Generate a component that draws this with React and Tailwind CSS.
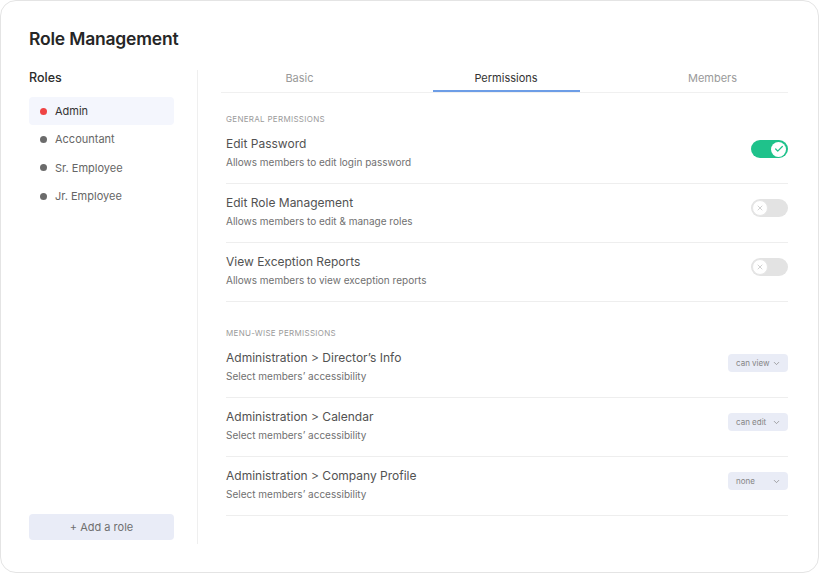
import { Check, X, ChevronDown } from "lucide-react";

const roles = [
    { name: "Admin", active: true },
    { name: "Accountant" },
    { name: "Sr. Employee" },
    { name: "Jr. Employee" },
];

const general = [
    { title: "Edit Password", desc: "Allows members to edit login password", on: true },
    { title: "Edit Role Management", desc: "Allows members to edit & manage roles" },
    { title: "View Exception Reports", desc: "Allows members to view exception reports" },
];

const menuWise = [
    { title: "Administration > Director’s Info", value: "can view" },
    { title: "Administration > Calendar", value: "can edit" },
    { title: "Administration > Company Profile", value: "none" },
];

// Small on/off switch used in general permissions
const Toggle = ({ on }) =>
    on ? (
        <div className="mt-1 w-[37px] h-[18px] rounded-full bg-[#1fc28b] flex items-center justify-end pr-[2px]">
            <div className="w-[15px] h-[15px] rounded-full bg-white flex items-center justify-center">
                <Check size={10} strokeWidth={3} className="text-[#1fc28b]" />
            </div>
        </div>
    ) : (
        <div className="mt-1 w-[37px] h-[18px] rounded-full bg-[#e3e3e3] flex items-center pl-[1px]">
            <div className="w-[16px] h-[16px] rounded-full bg-white border border-[#e6e6e6] flex items-center justify-center">
                <X size={8} strokeWidth={2.5} className="text-[#c8c8c8]" />
            </div>
        </div>
    );

const Row = ({ title, desc, children }) => (
    <div className="flex items-start justify-between pt-[11px] pb-[14px] border-b border-[#eeeeee]">
        <div>
            <div className="text-[12px] leading-4 text-[#525252]">{title}</div>
            <div className="text-[10px] leading-[14px] text-[#707070] mt-[3px]">{desc}</div>
        </div>
        {children}
    </div>
);

const App = () => {
    return (
        <div className="w-[819px] h-[573px] bg-white" style={{ fontFamily: "Inter, 'Noto Sans', sans-serif" }}>
            <div className="h-full rounded-2xl border border-[#e4e4e4] flex flex-col pl-7 pr-[30px] pt-[26px] pb-7">
                <h1 className="text-[17.5px] leading-6 font-semibold text-[#262626] tracking-[-0.2px]">Role Management</h1>

                <div className="flex flex-1 mt-[19px]">
                    {/* Roles list */}
                    <aside className="w-[145px] flex flex-col pb-1">
                        <div className="text-[12.5px] leading-4 font-medium text-[#2b2b2b]">Roles</div>
                        <div className="mt-[11px] flex flex-col">
                            {roles.map((r) => (
                                <div
                                    key={r.name}
                                    className={
                                        "h-[28.4px] flex items-center pl-[11px] gap-[8px] rounded " +
                                        (r.active ? "bg-[#f4f6fd]" : "")
                                    }
                                >
                                    <span className={"w-[7px] h-[7px] rounded-full " + (r.active ? "bg-[#ef4444]" : "bg-[#6b6b6b]")}></span>
                                    <span className={"text-[11px] " + (r.active ? "text-[#333]" : "text-[#666]")}>{r.name}</span>
                                </div>
                            ))}
                        </div>
                        <button className="mt-auto h-[26px] rounded bg-[#e9ecf7] text-[11px] text-[#6f6f6f]">+ Add a role</button>
                    </aside>

                    <div className="ml-[23px] border-l border-[#efefef]"></div>

                    {/* Permissions panel */}
                    <section className="flex-1 pl-[28px]">
                        <div className="flex justify-between border-b border-[#f0f0f0] -ml-[5px] pl-[5px] pr-[2px]">
                            {["Basic", "Permissions", "Members"].map((t) => (
                                <div
                                    key={t}
                                    className={
                                        "w-[147px] text-center text-[11px] leading-4 pb-[4px] border-b-2 " +
                                        (t === "Permissions" ? "border-[#6d9de6] text-[#333]" : "border-transparent text-[#9a9a9a]")
                                    }
                                >
                                    {t}
                                </div>
                            ))}
                        </div>

                        <div className="mt-5 text-[8px] leading-3 tracking-[0.3px] text-[#9b9b9b] uppercase">General permissions</div>
                        {general.map((g) => (
                            <Row key={g.title} title={g.title} desc={g.desc}>
                                <Toggle on={g.on} />
                            </Row>
                        ))}

                        <div className="mt-[25px] text-[8px] leading-3 tracking-[0.3px] text-[#9b9b9b] uppercase">Menu-wise permissions</div>
                        {menuWise.map((m) => (
                            <Row key={m.title} title={m.title} desc="Select members’ accessibility">
                                <div className="mt-1 w-[60px] h-[18px] rounded-[4px] bg-[#e9ecf6] flex items-center justify-between pl-2 pr-[7px]">
                                    <span className="text-[8px] text-[#858585]">{m.value}</span>
                                    <ChevronDown size={9} className="text-[#8a8a8a]" />
                                </div>
                            </Row>
                        ))}
                    </section>
                </div>
            </div>
        </div>
    );
};

export default App;
